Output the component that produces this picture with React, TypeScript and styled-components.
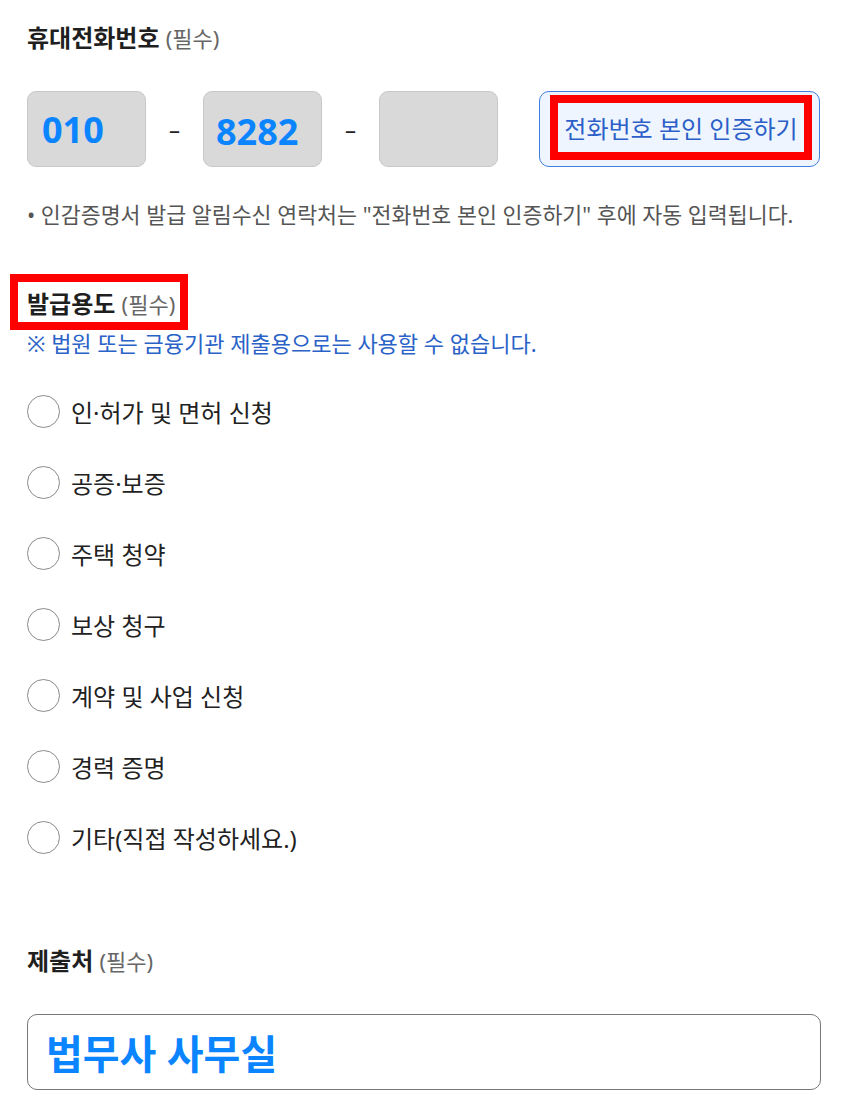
import React from "react";
import styled, { createGlobalStyle } from "styled-components";

const GlobalStyle = createGlobalStyle`
  html, body {
    margin: 0;
    padding: 0;
    background: #ffffff;
  }
  body {
    font-family: "Noto Sans", "Noto Sans CJK KR", sans-serif;
    color: #222;
  }
`;

const purposes = [
  "인·허가 및 면허 신청",
  "공증·보증",
  "주택 청약",
  "보상 청구",
  "계약 및 사업 신청",
  "경력 증명",
  "기타(직접 작성하세요.)",
];

export default function App(): React.ReactElement {
  return (
    <>
      <GlobalStyle />
      <Page>
        <Label>
          휴대전화번호 <Required>(필수)</Required>
        </Label>
        <PhoneRow>
          <PhoneBox $shift={0}>010</PhoneBox>
          <Dash>–</Dash>
          <PhoneBox $shift={5}>8282</PhoneBox>
          <Dash>–</Dash>
          <PhoneBox $shift={0} />
          <VerifyButton type="button">
            <Highlight $wide>전화번호 본인 인증하기</Highlight>
          </VerifyButton>
        </PhoneRow>
        <Note>• 인감증명서 발급 알림수신 연락처는 "전화번호 본인 인증하기" 후에 자동 입력됩니다.</Note>

        <PurposeHeader>
          <Highlight>
            <Label as="span">
              발급용도 <Required>(필수)</Required>
            </Label>
          </Highlight>
        </PurposeHeader>
        <Notice>※ 법원 또는 금융기관 제출용으로는 사용할 수 없습니다.</Notice>
        <RadioList>
          {purposes.map((p) => (
            <RadioRow key={p}>
              <RadioCircle />
              <RadioText>{p}</RadioText>
            </RadioRow>
          ))}
        </RadioList>

        <SubmitLabel>
          제출처 <Required>(필수)</Required>
        </SubmitLabel>
        <TextField>법무사 사무실</TextField>
      </Page>
    </>
  );
}

const Page = styled.div`
  width: 793px;
  padding: 23px 0 0 27px;
  display: flex;
  flex-direction: column;
  align-items: flex-start;
`;

const Label = styled.div`
  font-size: 24px;
  line-height: 30px;
  font-weight: 700;
  color: #1f1f1f;
`;

const Required = styled.span`
  font-size: 22px;
  font-weight: 400;
  color: #666;
`;

const PhoneRow = styled.div`
  margin-top: 38px;
  display: flex;
  align-items: center;
  width: 100%;
`;

const PhoneBox = styled.div<{ $shift: number }>`
  box-sizing: border-box;
  width: 119px;
  height: 76px;
  background: #d9d9d9;
  border: 1px solid #c8c8c8;
  border-radius: 9px;
  padding: ${(p) => p.$shift}px 0 0 ${(p) => (p.$shift ? 12 : 14)}px;
  display: flex;
  align-items: center;
  color: #0a84ff;
  font-size: 36px;
  font-weight: 700;
`;

const Dash = styled.div`
  width: 57px;
  text-align: center;
  font-size: 22px;
  color: #222;
`;

const VerifyButton = styled.button`
  box-sizing: border-box;
  margin-left: auto;
  width: 281px;
  height: 76px;
  background: #eef5ff;
  border: 1px solid #3f7fe0;
  border-radius: 10px;
  padding: 3px 7px 6px 10px;
  display: flex;
  align-items: stretch;
  font-family: inherit;
  cursor: pointer;
`;

const Highlight = styled.span<{ $wide?: boolean }>`
  box-sizing: border-box;
  border: 8px solid #ff0000;
  display: flex;
  align-items: center;
  justify-content: center;
  ${(p) =>
    p.$wide
      ? `flex: 1; color: #2c5fc8; font-size: 24px;`
      : `height: 56px; padding: 4px 5px 0 9px;`}
`;

const Note = styled.div`
  margin-top: 34px;
  font-size: 21.7px;
  line-height: 28px;
  color: #555;
`;

const PurposeHeader = styled.div`
  margin-top: 45px;
  margin-left: -17px;
  display: flex;
`;

const Notice = styled.div`
  font-size: 22px;
  line-height: 26px;
  color: #2a62c8;
`;

const RadioList = styled.div`
  margin-top: 20px;
  display: flex;
  flex-direction: column;
`;

const RadioRow = styled.label`
  height: 71px;
  display: flex;
  align-items: center;
  gap: 11px;
`;

const RadioCircle = styled.span`
  box-sizing: border-box;
  width: 33px;
  height: 33px;
  border: 1px solid #8a8a8a;
  border-radius: 50%;
  background: #fff;
`;

const RadioText = styled.span`
  font-size: 24px;
  color: #222;
`;

const SubmitLabel = styled(Label)`
  margin-top: 73px;
`;

const TextField = styled.div`
  box-sizing: border-box;
  margin-top: 38px;
  width: 794px;
  height: 76px;
  border: 1px solid #777;
  border-radius: 10px;
  padding: 0 18px;
  display: flex;
  align-items: center;
  color: #0a84ff;
  font-size: 40px;
  font-weight: 700;
`;
